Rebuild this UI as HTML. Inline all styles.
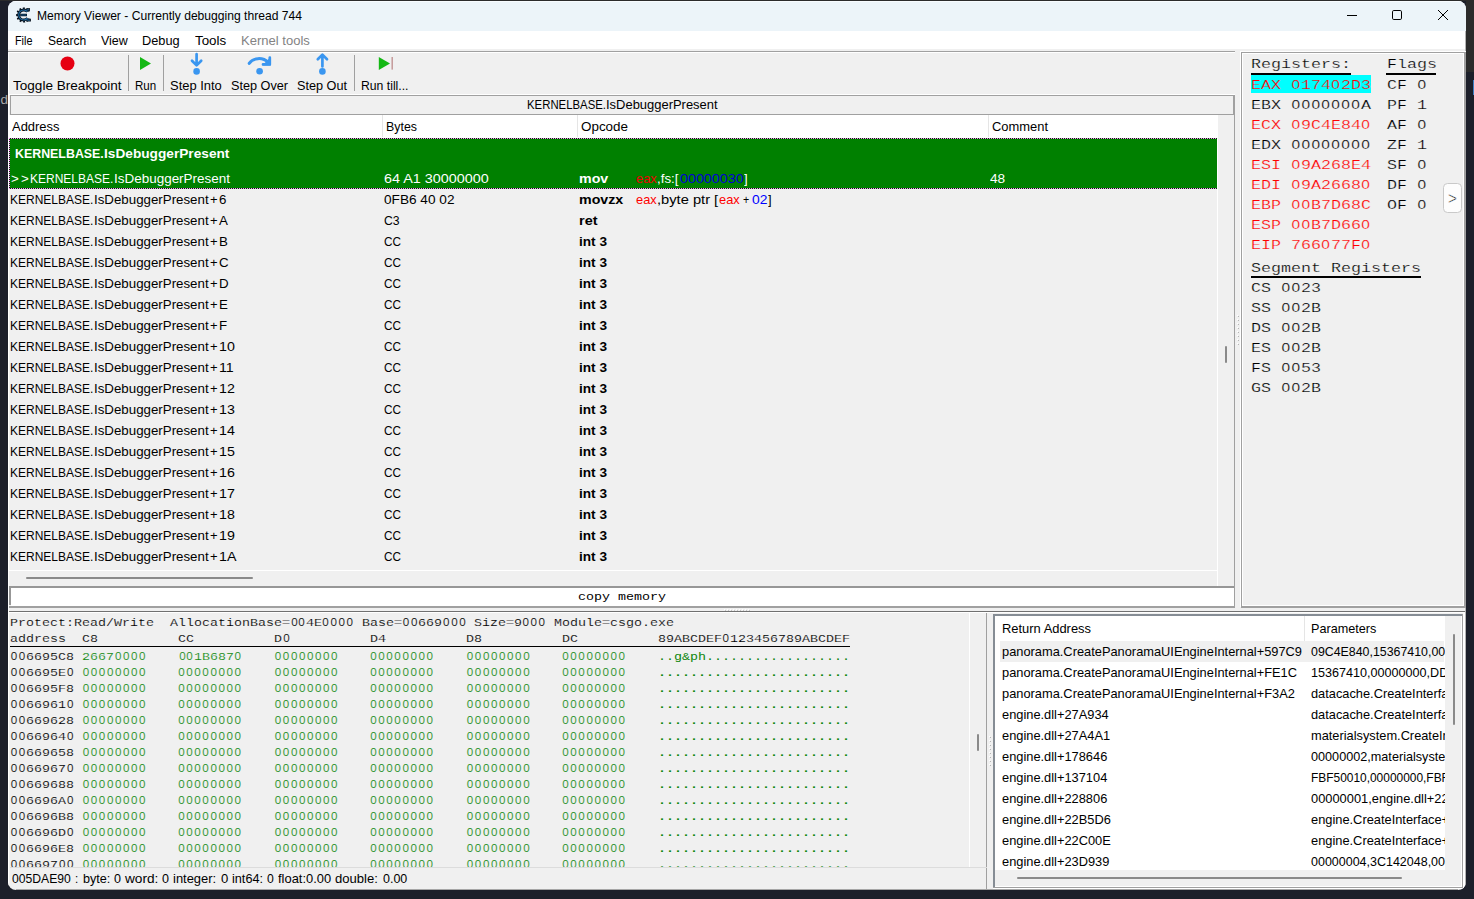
<!DOCTYPE html>
<html><head><meta charset="utf-8"><title>Memory Viewer</title>
<style>
html,body{margin:0;padding:0;}
body{width:1474px;height:899px;overflow:hidden;background:#1c1f2a;position:relative;font-family:"Liberation Sans",sans-serif;}
#w{position:absolute;left:8px;top:1px;width:1458px;height:889px;border-radius:8px;overflow:hidden;background:#f0f0f0;}
#o{position:absolute;left:-8px;top:-1px;width:1474px;height:899px;}
#o div,#o span,#o svg,.x{position:absolute;}
.t{white-space:pre;line-height:1;transform-origin:0 0;color:#000;font-family:"Liberation Sans",sans-serif;}
.m{font-family:"Liberation Mono",monospace;}
.b{font-weight:bold;}
.rg i{font-size:101% !important;width:0.594em !important;transform:scaleX(0.86);}
.m i{font-family:"Liberation Sans",sans-serif;font-style:normal;font-size:94.8%;display:inline-block;width:0.633em;text-align:center;line-height:0;transform:scaleX(0.92);}
</style></head><body>
<div class="x" style="left:0;top:0;width:1474px;height:1px;background:#2b2b2b"></div>
<div class="x" style="left:1466px;top:0;width:8px;height:72px;background:#2b2b2b"></div>
<div class="x" style="left:1472.5px;top:80px;width:2px;height:15px;background:#3b7fc4"></div>
<span class="x t" style="left:0.5px;top:93px;font-size:13.5px;color:#a9a9a9">d</span>
<div id="w"><div id="o">
<div style="left:8px;top:1px;width:1458px;height:30px;background:#ecf4f9;"></div>
<div style="left:8px;top:1px;width:1458px;height:1px;background:#f8fcff;"></div>
<svg style="left:16px;top:7px" width="16" height="16" viewBox="0 0 16 16">
<path d="M11.94 2.94A6.6 6.6 0 1 0 11.76 13.20" fill="none" stroke="#08131f" stroke-width="2" stroke-dasharray="1.8 1.66"/>
<path d="M11.42 4.65A5.0 5.0 0 1 0 11.53 11.21" fill="none" stroke="#08131f" stroke-width="2.8"/>
<path d="M4.2 8H11" stroke="#08131f" stroke-width="2.4"/>
<path d="M10 1.5L13.9 1.1V4.3L11.4 4.9ZM10 14.5L14.9 14.6V11.7L11.6 11.3Z" fill="#08131f"/>
<path d="M10.6 3L13 2.7M10.8 13L14 13.2" stroke="#1f6fa8" stroke-width="0.9"/>
<path d="M11.42 4.65A5.0 5.0 0 1 0 11.53 11.21" fill="none" stroke="#1f6fa8" stroke-width="1.1"/>
<path d="M4.8 8H10.4" stroke="#1f6fa8" stroke-width="0.8"/>
</svg>
<span class="t" style="left:36.8px;top:9.83px;font-size:12.6px;transform:scaleX(0.9616);">Memory Viewer - Currently debugging thread 744</span>
<svg style="left:1340px;top:5px" width="120" height="22" viewBox="0 0 120 22">
<g fill="none" stroke="#000" stroke-width="1">
<path d="M7 10.5H17"/>
<rect x="52.5" y="5.5" width="9" height="9" rx="1.3"/>
<path d="M98 5L108 15M108 5L98 15"/>
</g></svg>
<div style="left:8px;top:31px;width:1458px;height:18px;background:#fff;"></div>
<span class="t" style="left:15.1px;top:33.91px;font-size:13.1px;transform:scaleX(0.8243);">File</span>
<span class="t" style="left:47.9px;top:33.91px;font-size:13.1px;transform:scaleX(0.9205);">Search</span>
<span class="t" style="left:100.5px;top:33.91px;font-size:13.1px;transform:scaleX(0.9518);">View</span>
<span class="t" style="left:142.3px;top:33.91px;font-size:13.1px;transform:scaleX(0.9743);">Debug</span>
<span class="t" style="left:194.9px;top:33.91px;font-size:13.1px;transform:scaleX(1.0203);">Tools</span>
<span class="t" style="left:241.3px;top:33.91px;font-size:13.1px;color:#838383;transform:scaleX(0.9948);">Kernel tools</span>
<div style="left:8px;top:51px;width:1227px;height:1px;background:#a0a0a0;"></div>
<div style="left:8px;top:52px;width:1227px;height:1px;background:#fff;"></div>
<svg style="left:8px;top:52px" width="420" height="42" viewBox="8 52 420 42">
<circle cx="67.5" cy="63.5" r="7" fill="#e60012"/>
<path d="M140 57L151 63.5L140 70Z" fill="#14b814"/>
<g fill="none" stroke="#3a96f0" stroke-width="2.7" stroke-linecap="round" stroke-linejoin="round">
<path d="M196.6 54.2V65M192 60.8L196.6 65.4L201.2 60.8"/>
<path d="M249.2 63.4C253 57.8 262.5 56.6 268.4 62.6" stroke-width="3"/>
<path d="M269.8 57.6V64.4H263"/>
<path d="M322.4 66.4V55M317.8 59.2L322.4 54.6L327 59.2"/>
</g>
<g fill="#3a96f0"><circle cx="196.6" cy="71.4" r="3.3"/><circle cx="259.6" cy="71.2" r="3.3"/><circle cx="322.4" cy="71.4" r="3.3"/>
<path d="M270.9 56.6V65.5H262.4Z"/></g>
<path d="M378.8 57L390 63.5L378.8 70Z" fill="#14b814"/>
<rect x="391.6" y="57" width="1.1" height="12.6" fill="#b47a7a"/>
<g fill="#a0a0a0"><rect x="128" y="55" width="1" height="36"/><rect x="163" y="55" width="1" height="36"/><rect x="354" y="55" width="1" height="36"/></g>
</svg>
<span class="t" style="left:13.1px;top:78.91px;font-size:13.1px;transform:scaleX(1.0360);">Toggle Breakpoint</span>
<span class="t" style="left:135.1px;top:78.91px;font-size:13.1px;transform:scaleX(0.8822);">Run</span>
<span class="t" style="left:170.1px;top:78.91px;font-size:13.1px;transform:scaleX(0.9881);">Step Into</span>
<span class="t" style="left:231.3px;top:78.91px;font-size:13.1px;transform:scaleX(0.9669);">Step Over</span>
<span class="t" style="left:297.3px;top:78.91px;font-size:13.1px;transform:scaleX(0.9674);">Step Out</span>
<span class="t" style="left:360.6px;top:78.91px;font-size:13.1px;transform:scaleX(0.9325);">Run till...</span>
<div style="left:9px;top:94px;width:1226px;height:1px;background:#fff;"></div>
<div style="left:10px;top:95px;width:1224px;height:20px;background:#f0f0f0;box-sizing:border-box;border:1px solid #a0a0a0;"></div>
<div style="left:1234px;top:95px;width:1px;height:20px;background:#fff;"></div>
<span class="t" style="left:526.5px;top:98.83px;font-size:12.6px;transform:scaleX(0.9029);">KERNELBASE.</span>
<span class="t" style="left:605.9px;top:98.83px;font-size:12.6px;transform:scaleX(1.0284);">IsDebuggerPresent</span>
<div style="left:1234px;top:95px;width:1px;height:512px;background:#a0a0a0;"></div>
<div style="left:9px;top:115px;width:1209px;height:23px;background:#fff;"></div>
<div style="left:382px;top:115px;width:1px;height:22px;background:#e5e5e5;"></div>
<div style="left:577px;top:115px;width:1px;height:22px;background:#e5e5e5;"></div>
<div style="left:988px;top:115px;width:1px;height:22px;background:#e5e5e5;"></div>
<span class="t" style="left:11.8px;top:120.11px;font-size:13.1px;transform:scaleX(0.9886);">Address</span>
<span class="t" style="left:386.1px;top:120.11px;font-size:13.1px;transform:scaleX(0.9466);">Bytes</span>
<span class="t" style="left:580.5px;top:120.11px;font-size:13.1px;transform:scaleX(1.0245);">Opcode</span>
<span class="t" style="left:991.8px;top:120.11px;font-size:13.1px;transform:scaleX(0.9865);">Comment</span>
<div style="left:9px;top:138px;width:1208px;height:51px;background:#008000;"></div>
<div style="left:9px;top:138px;width:1208px;height:1px;background:repeating-linear-gradient(90deg,#ff80ff 0 1px,#004000 1px 2px);"></div>
<div style="left:9px;top:188px;width:1208px;height:1px;background:repeating-linear-gradient(90deg,#ff80ff 0 1px,#004000 1px 2px);"></div>
<div style="left:9px;top:138px;width:1px;height:51px;background:repeating-linear-gradient(180deg,#ff80ff 0 1px,#004000 1px 2px);"></div>
<div style="left:1217px;top:115px;width:1px;height:471px;background:#fff;"></div>
<span class="t b" style="left:14.6px;top:146.74px;font-size:13.3px;color:#fff;transform:scaleX(0.9317);">KERNELBASE.</span>
<span class="t b" style="left:103.9px;top:146.74px;font-size:13.3px;color:#fff;transform:scaleX(1.0284);">IsDebuggerPresent</span>
<span class="t" style="left:10.9px;top:171.94px;font-size:13.3px;color:#fff;transform:scaleX(1.0044);">&gt;</span>
<span class="t" style="left:21.3px;top:171.94px;font-size:13.3px;color:#fff;transform:scaleX(1.0044);">&gt;</span>
<span class="t" style="left:30.2px;top:171.94px;font-size:13.3px;color:#fff;transform:scaleX(0.9016);">KERNELBASE.</span>
<span class="t" style="left:113.7px;top:171.94px;font-size:13.3px;color:#fff;transform:scaleX(1.0124);">IsDebuggerPresent</span>
<span class="t" style="left:383.8px;top:171.94px;font-size:13.3px;color:#fff;transform:scaleX(1.0808);">64 A1 30000000</span>
<span class="t b" style="left:578.9px;top:171.94px;font-size:13.3px;color:#fff;transform:scaleX(1.0679);">mov</span>
<span class="t" style="left:635.6px;top:171.94px;font-size:13.3px;color:#ec0000;transform:scaleX(0.9649);">eax</span>
<span class="t" style="left:656.9px;top:171.94px;font-size:13.3px;color:#fff;transform:scaleX(1.0029);">,fs:[</span>
<span class="t" style="left:679.9px;top:171.94px;font-size:13.3px;color:#0000d8;transform:scaleX(1.0748);">00000030</span>
<span class="t" style="left:744.3px;top:171.94px;font-size:13.3px;color:#fff;transform:scaleX(0.9992);">]</span>
<span class="t" style="left:989.9px;top:171.94px;font-size:13.3px;color:#fff;transform:scaleX(1.0272);">48</span>
<span class="t" style="left:10.2px;top:192.99px;font-size:13.3px;transform:scaleX(0.9016);">KERNELBASE.</span>
<span class="t" style="left:93.7px;top:192.99px;font-size:13.3px;transform:scaleX(1.0002);">IsDebuggerPresent</span>
<span class="t" style="left:210.2px;top:192.99px;font-size:13.3px;transform:scaleX(0.9787);">+</span>
<span class="t" style="left:219.0px;top:192.99px;font-size:13.3px;transform:scaleX(1.0000);">6</span>
<span class="t" style="left:383.8px;top:192.99px;font-size:13.3px;transform:scaleX(1.0252);">0FB6 40 02</span>
<span class="t b" style="left:578.9px;top:192.99px;font-size:13.3px;transform:scaleX(1.0679);">movzx</span>
<span class="t" style="left:10.2px;top:213.99px;font-size:13.3px;transform:scaleX(0.9016);">KERNELBASE.</span>
<span class="t" style="left:93.7px;top:213.99px;font-size:13.3px;transform:scaleX(1.0002);">IsDebuggerPresent</span>
<span class="t" style="left:210.2px;top:213.99px;font-size:13.3px;transform:scaleX(0.9787);">+</span>
<span class="t" style="left:219.0px;top:213.99px;font-size:13.3px;transform:scaleX(1.0000);">A</span>
<span class="t" style="left:383.8px;top:213.99px;font-size:13.3px;transform:scaleX(0.9176);">C3</span>
<span class="t b" style="left:578.9px;top:213.99px;font-size:13.3px;transform:scaleX(1.0882);">ret</span>
<span class="t" style="left:10.2px;top:234.99px;font-size:13.3px;transform:scaleX(0.9016);">KERNELBASE.</span>
<span class="t" style="left:93.7px;top:234.99px;font-size:13.3px;transform:scaleX(1.0002);">IsDebuggerPresent</span>
<span class="t" style="left:210.2px;top:234.99px;font-size:13.3px;transform:scaleX(0.9787);">+</span>
<span class="t" style="left:219.0px;top:234.99px;font-size:13.3px;transform:scaleX(1.0000);">B</span>
<span class="t" style="left:383.8px;top:234.99px;font-size:13.3px;transform:scaleX(0.8846);">CC</span>
<span class="t b" style="left:578.9px;top:234.99px;font-size:13.3px;transform:scaleX(1.0240);">int 3</span>
<span class="t" style="left:10.2px;top:255.99px;font-size:13.3px;transform:scaleX(0.9016);">KERNELBASE.</span>
<span class="t" style="left:93.7px;top:255.99px;font-size:13.3px;transform:scaleX(1.0002);">IsDebuggerPresent</span>
<span class="t" style="left:210.2px;top:255.99px;font-size:13.3px;transform:scaleX(0.9787);">+</span>
<span class="t" style="left:219.0px;top:255.99px;font-size:13.3px;transform:scaleX(1.0000);">C</span>
<span class="t" style="left:383.8px;top:255.99px;font-size:13.3px;transform:scaleX(0.8846);">CC</span>
<span class="t b" style="left:578.9px;top:255.99px;font-size:13.3px;transform:scaleX(1.0240);">int 3</span>
<span class="t" style="left:10.2px;top:276.99px;font-size:13.3px;transform:scaleX(0.9016);">KERNELBASE.</span>
<span class="t" style="left:93.7px;top:276.99px;font-size:13.3px;transform:scaleX(1.0002);">IsDebuggerPresent</span>
<span class="t" style="left:210.2px;top:276.99px;font-size:13.3px;transform:scaleX(0.9787);">+</span>
<span class="t" style="left:219.0px;top:276.99px;font-size:13.3px;transform:scaleX(1.0000);">D</span>
<span class="t" style="left:383.8px;top:276.99px;font-size:13.3px;transform:scaleX(0.8846);">CC</span>
<span class="t b" style="left:578.9px;top:276.99px;font-size:13.3px;transform:scaleX(1.0240);">int 3</span>
<span class="t" style="left:10.2px;top:297.99px;font-size:13.3px;transform:scaleX(0.9016);">KERNELBASE.</span>
<span class="t" style="left:93.7px;top:297.99px;font-size:13.3px;transform:scaleX(1.0002);">IsDebuggerPresent</span>
<span class="t" style="left:210.2px;top:297.99px;font-size:13.3px;transform:scaleX(0.9787);">+</span>
<span class="t" style="left:219.0px;top:297.99px;font-size:13.3px;transform:scaleX(1.0000);">E</span>
<span class="t" style="left:383.8px;top:297.99px;font-size:13.3px;transform:scaleX(0.8846);">CC</span>
<span class="t b" style="left:578.9px;top:297.99px;font-size:13.3px;transform:scaleX(1.0240);">int 3</span>
<span class="t" style="left:10.2px;top:318.99px;font-size:13.3px;transform:scaleX(0.9016);">KERNELBASE.</span>
<span class="t" style="left:93.7px;top:318.99px;font-size:13.3px;transform:scaleX(1.0002);">IsDebuggerPresent</span>
<span class="t" style="left:210.2px;top:318.99px;font-size:13.3px;transform:scaleX(0.9787);">+</span>
<span class="t" style="left:219.0px;top:318.99px;font-size:13.3px;transform:scaleX(1.0000);">F</span>
<span class="t" style="left:383.8px;top:318.99px;font-size:13.3px;transform:scaleX(0.8846);">CC</span>
<span class="t b" style="left:578.9px;top:318.99px;font-size:13.3px;transform:scaleX(1.0240);">int 3</span>
<span class="t" style="left:10.2px;top:339.99px;font-size:13.3px;transform:scaleX(0.9016);">KERNELBASE.</span>
<span class="t" style="left:93.7px;top:339.99px;font-size:13.3px;transform:scaleX(1.0002);">IsDebuggerPresent</span>
<span class="t" style="left:210.2px;top:339.99px;font-size:13.3px;transform:scaleX(0.9787);">+</span>
<span class="t" style="left:219.0px;top:339.99px;font-size:13.3px;transform:scaleX(1.0700);">10</span>
<span class="t" style="left:383.8px;top:339.99px;font-size:13.3px;transform:scaleX(0.8846);">CC</span>
<span class="t b" style="left:578.9px;top:339.99px;font-size:13.3px;transform:scaleX(1.0240);">int 3</span>
<span class="t" style="left:10.2px;top:360.99px;font-size:13.3px;transform:scaleX(0.9016);">KERNELBASE.</span>
<span class="t" style="left:93.7px;top:360.99px;font-size:13.3px;transform:scaleX(1.0002);">IsDebuggerPresent</span>
<span class="t" style="left:210.2px;top:360.99px;font-size:13.3px;transform:scaleX(0.9787);">+</span>
<span class="t" style="left:219.0px;top:360.99px;font-size:13.3px;transform:scaleX(1.0700);">11</span>
<span class="t" style="left:383.8px;top:360.99px;font-size:13.3px;transform:scaleX(0.8846);">CC</span>
<span class="t b" style="left:578.9px;top:360.99px;font-size:13.3px;transform:scaleX(1.0240);">int 3</span>
<span class="t" style="left:10.2px;top:381.99px;font-size:13.3px;transform:scaleX(0.9016);">KERNELBASE.</span>
<span class="t" style="left:93.7px;top:381.99px;font-size:13.3px;transform:scaleX(1.0002);">IsDebuggerPresent</span>
<span class="t" style="left:210.2px;top:381.99px;font-size:13.3px;transform:scaleX(0.9787);">+</span>
<span class="t" style="left:219.0px;top:381.99px;font-size:13.3px;transform:scaleX(1.0700);">12</span>
<span class="t" style="left:383.8px;top:381.99px;font-size:13.3px;transform:scaleX(0.8846);">CC</span>
<span class="t b" style="left:578.9px;top:381.99px;font-size:13.3px;transform:scaleX(1.0240);">int 3</span>
<span class="t" style="left:10.2px;top:402.99px;font-size:13.3px;transform:scaleX(0.9016);">KERNELBASE.</span>
<span class="t" style="left:93.7px;top:402.99px;font-size:13.3px;transform:scaleX(1.0002);">IsDebuggerPresent</span>
<span class="t" style="left:210.2px;top:402.99px;font-size:13.3px;transform:scaleX(0.9787);">+</span>
<span class="t" style="left:219.0px;top:402.99px;font-size:13.3px;transform:scaleX(1.0700);">13</span>
<span class="t" style="left:383.8px;top:402.99px;font-size:13.3px;transform:scaleX(0.8846);">CC</span>
<span class="t b" style="left:578.9px;top:402.99px;font-size:13.3px;transform:scaleX(1.0240);">int 3</span>
<span class="t" style="left:10.2px;top:423.99px;font-size:13.3px;transform:scaleX(0.9016);">KERNELBASE.</span>
<span class="t" style="left:93.7px;top:423.99px;font-size:13.3px;transform:scaleX(1.0002);">IsDebuggerPresent</span>
<span class="t" style="left:210.2px;top:423.99px;font-size:13.3px;transform:scaleX(0.9787);">+</span>
<span class="t" style="left:219.0px;top:423.99px;font-size:13.3px;transform:scaleX(1.0700);">14</span>
<span class="t" style="left:383.8px;top:423.99px;font-size:13.3px;transform:scaleX(0.8846);">CC</span>
<span class="t b" style="left:578.9px;top:423.99px;font-size:13.3px;transform:scaleX(1.0240);">int 3</span>
<span class="t" style="left:10.2px;top:444.99px;font-size:13.3px;transform:scaleX(0.9016);">KERNELBASE.</span>
<span class="t" style="left:93.7px;top:444.99px;font-size:13.3px;transform:scaleX(1.0002);">IsDebuggerPresent</span>
<span class="t" style="left:210.2px;top:444.99px;font-size:13.3px;transform:scaleX(0.9787);">+</span>
<span class="t" style="left:219.0px;top:444.99px;font-size:13.3px;transform:scaleX(1.0700);">15</span>
<span class="t" style="left:383.8px;top:444.99px;font-size:13.3px;transform:scaleX(0.8846);">CC</span>
<span class="t b" style="left:578.9px;top:444.99px;font-size:13.3px;transform:scaleX(1.0240);">int 3</span>
<span class="t" style="left:10.2px;top:465.99px;font-size:13.3px;transform:scaleX(0.9016);">KERNELBASE.</span>
<span class="t" style="left:93.7px;top:465.99px;font-size:13.3px;transform:scaleX(1.0002);">IsDebuggerPresent</span>
<span class="t" style="left:210.2px;top:465.99px;font-size:13.3px;transform:scaleX(0.9787);">+</span>
<span class="t" style="left:219.0px;top:465.99px;font-size:13.3px;transform:scaleX(1.0700);">16</span>
<span class="t" style="left:383.8px;top:465.99px;font-size:13.3px;transform:scaleX(0.8846);">CC</span>
<span class="t b" style="left:578.9px;top:465.99px;font-size:13.3px;transform:scaleX(1.0240);">int 3</span>
<span class="t" style="left:10.2px;top:486.99px;font-size:13.3px;transform:scaleX(0.9016);">KERNELBASE.</span>
<span class="t" style="left:93.7px;top:486.99px;font-size:13.3px;transform:scaleX(1.0002);">IsDebuggerPresent</span>
<span class="t" style="left:210.2px;top:486.99px;font-size:13.3px;transform:scaleX(0.9787);">+</span>
<span class="t" style="left:219.0px;top:486.99px;font-size:13.3px;transform:scaleX(1.0700);">17</span>
<span class="t" style="left:383.8px;top:486.99px;font-size:13.3px;transform:scaleX(0.8846);">CC</span>
<span class="t b" style="left:578.9px;top:486.99px;font-size:13.3px;transform:scaleX(1.0240);">int 3</span>
<span class="t" style="left:10.2px;top:507.99px;font-size:13.3px;transform:scaleX(0.9016);">KERNELBASE.</span>
<span class="t" style="left:93.7px;top:507.99px;font-size:13.3px;transform:scaleX(1.0002);">IsDebuggerPresent</span>
<span class="t" style="left:210.2px;top:507.99px;font-size:13.3px;transform:scaleX(0.9787);">+</span>
<span class="t" style="left:219.0px;top:507.99px;font-size:13.3px;transform:scaleX(1.0700);">18</span>
<span class="t" style="left:383.8px;top:507.99px;font-size:13.3px;transform:scaleX(0.8846);">CC</span>
<span class="t b" style="left:578.9px;top:507.99px;font-size:13.3px;transform:scaleX(1.0240);">int 3</span>
<span class="t" style="left:10.2px;top:528.99px;font-size:13.3px;transform:scaleX(0.9016);">KERNELBASE.</span>
<span class="t" style="left:93.7px;top:528.99px;font-size:13.3px;transform:scaleX(1.0002);">IsDebuggerPresent</span>
<span class="t" style="left:210.2px;top:528.99px;font-size:13.3px;transform:scaleX(0.9787);">+</span>
<span class="t" style="left:219.0px;top:528.99px;font-size:13.3px;transform:scaleX(1.0700);">19</span>
<span class="t" style="left:383.8px;top:528.99px;font-size:13.3px;transform:scaleX(0.8846);">CC</span>
<span class="t b" style="left:578.9px;top:528.99px;font-size:13.3px;transform:scaleX(1.0240);">int 3</span>
<span class="t" style="left:10.2px;top:549.99px;font-size:13.3px;transform:scaleX(0.9016);">KERNELBASE.</span>
<span class="t" style="left:93.7px;top:549.99px;font-size:13.3px;transform:scaleX(1.0002);">IsDebuggerPresent</span>
<span class="t" style="left:210.2px;top:549.99px;font-size:13.3px;transform:scaleX(0.9787);">+</span>
<span class="t" style="left:219.0px;top:549.99px;font-size:13.3px;transform:scaleX(1.0700);">1A</span>
<span class="t" style="left:383.8px;top:549.99px;font-size:13.3px;transform:scaleX(0.8846);">CC</span>
<span class="t b" style="left:578.9px;top:549.99px;font-size:13.3px;transform:scaleX(1.0240);">int 3</span>
<span class="t" style="left:635.6px;top:192.99px;font-size:13.3px;color:#ff0000;transform:scaleX(0.9649);">eax</span>
<span class="t" style="left:656.9px;top:192.99px;font-size:13.3px;transform:scaleX(1.1039);">,byte ptr [</span>
<span class="t" style="left:718.6px;top:192.99px;font-size:13.3px;color:#ff0000;transform:scaleX(0.9649);">eax</span>
<span class="t" style="left:742.6px;top:192.99px;font-size:13.3px;transform:scaleX(0.7984);">+</span>
<span class="t" style="left:751.9px;top:192.99px;font-size:13.3px;color:#0000ff;transform:scaleX(1.0408);">02</span>
<span class="t" style="left:768.3px;top:192.99px;font-size:13.3px;transform:scaleX(0.9722);">]</span>
<div style="left:1225px;top:346px;width:2px;height:17px;background:#8a8a8a;border-radius:1px;"></div>
<div style="left:9px;top:570px;width:1209px;height:1px;background:#fff;"></div>
<div style="left:26px;top:577px;width:227px;height:2px;background:#8a8a8a;border-radius:1px;"></div>
<div style="left:9px;top:586px;width:1225px;height:2px;background:#979797;"></div>
<div style="left:9px;top:586px;width:2px;height:19px;background:#979797;"></div>
<div style="left:11px;top:588px;width:1223px;height:18px;background:#fff;"></div>
<div style="left:9px;top:606px;width:1226px;height:1.5px;background:#a0a0a0;"></div>
<span class="t m" style="left:577.5px;top:591.18px;font-size:11.5px;transform:scaleX(1.1591);">copy memory</span>
<div style="left:724px;top:609px;width:1px;height:1px;background:#fff;"></div>
<div style="left:725px;top:610px;width:1px;height:1px;background:#c4c4c4;"></div>
<div style="left:727px;top:609px;width:1px;height:1px;background:#fff;"></div>
<div style="left:728px;top:610px;width:1px;height:1px;background:#c4c4c4;"></div>
<div style="left:730px;top:609px;width:1px;height:1px;background:#fff;"></div>
<div style="left:731px;top:610px;width:1px;height:1px;background:#c4c4c4;"></div>
<div style="left:733px;top:609px;width:1px;height:1px;background:#fff;"></div>
<div style="left:734px;top:610px;width:1px;height:1px;background:#c4c4c4;"></div>
<div style="left:736px;top:609px;width:1px;height:1px;background:#fff;"></div>
<div style="left:737px;top:610px;width:1px;height:1px;background:#c4c4c4;"></div>
<div style="left:739px;top:609px;width:1px;height:1px;background:#fff;"></div>
<div style="left:740px;top:610px;width:1px;height:1px;background:#c4c4c4;"></div>
<div style="left:742px;top:609px;width:1px;height:1px;background:#fff;"></div>
<div style="left:743px;top:610px;width:1px;height:1px;background:#c4c4c4;"></div>
<div style="left:745px;top:609px;width:1px;height:1px;background:#fff;"></div>
<div style="left:746px;top:610px;width:1px;height:1px;background:#c4c4c4;"></div>
<div style="left:748px;top:609px;width:1px;height:1px;background:#fff;"></div>
<div style="left:749px;top:610px;width:1px;height:1px;background:#c4c4c4;"></div>
<div style="left:8px;top:611px;width:1458px;height:1px;background:#707070;"></div>
<div style="left:8px;top:612px;width:1458px;height:1px;background:#fff;"></div>
<div style="left:986px;top:613px;width:1px;height:276px;background:#a0a0a0;"></div>
<div style="left:8px;top:52px;width:1px;height:838px;background:#fff;"></div>
<span class="t m" style="left:10.4px;top:616.91px;font-size:11.6px;transform:scaleX(1.1498);-webkit-text-stroke:0.14px #f0f0f0;">Protect:Read/Write  AllocationBase=<i>0</i><i>0</i>4E<i>0</i><i>0</i><i>0</i><i>0</i> Base=<i>0</i><i>0</i>669<i>0</i><i>0</i><i>0</i> Size=9<i>0</i><i>0</i><i>0</i> Module=csgo.exe</span>
<span class="t m" style="left:10.4px;top:633.11px;font-size:11.6px;transform:scaleX(1.1498);-webkit-text-stroke:0.14px #f0f0f0;">address  C8          CC          D<i>0</i>          D4          D8          DC          89ABCDEF<i>0</i>123456789ABCDEF</span>
<div style="left:10px;top:646px;width:840px;height:1px;background:#000;"></div>
<div style="left:9px;top:648px;width:962px;height:219px;overflow:hidden"><div style="left:-9px;top:-648px;width:1px;height:1px">
<span class="t m" style="left:10.4px;top:651.11px;font-size:11.6px;transform:scaleX(1.1496);-webkit-text-stroke:0.14px #f0f0f0;"><i>0</i><i>0</i>6695C8</span>
<span class="t m" style="left:82.4px;top:651.11px;font-size:11.6px;color:#128a12;transform:scaleX(1.1498);-webkit-text-stroke:0.14px #f0f0f0;">2667<i>0</i><i>0</i><i>0</i><i>0</i>    <i>0</i><i>0</i>1B687<i>0</i>    <i>0</i><i>0</i><i>0</i><i>0</i><i>0</i><i>0</i><i>0</i><i>0</i>    <i>0</i><i>0</i><i>0</i><i>0</i><i>0</i><i>0</i><i>0</i><i>0</i>    <i>0</i><i>0</i><i>0</i><i>0</i><i>0</i><i>0</i><i>0</i><i>0</i>    <i>0</i><i>0</i><i>0</i><i>0</i><i>0</i><i>0</i><i>0</i><i>0</i></span>
<span class="t m" style="left:658.4px;top:651.11px;font-size:11.6px;color:#0c860c;transform:scaleX(1.1498);">..g&amp;ph..................</span>
<span class="t m" style="left:10.4px;top:667.11px;font-size:11.6px;transform:scaleX(1.1496);-webkit-text-stroke:0.14px #f0f0f0;"><i>0</i><i>0</i>6695E<i>0</i></span>
<span class="t m" style="left:82.4px;top:667.11px;font-size:11.6px;color:#128a12;transform:scaleX(1.1498);-webkit-text-stroke:0.14px #f0f0f0;"><i>0</i><i>0</i><i>0</i><i>0</i><i>0</i><i>0</i><i>0</i><i>0</i>    <i>0</i><i>0</i><i>0</i><i>0</i><i>0</i><i>0</i><i>0</i><i>0</i>    <i>0</i><i>0</i><i>0</i><i>0</i><i>0</i><i>0</i><i>0</i><i>0</i>    <i>0</i><i>0</i><i>0</i><i>0</i><i>0</i><i>0</i><i>0</i><i>0</i>    <i>0</i><i>0</i><i>0</i><i>0</i><i>0</i><i>0</i><i>0</i><i>0</i>    <i>0</i><i>0</i><i>0</i><i>0</i><i>0</i><i>0</i><i>0</i><i>0</i></span>
<span class="t m b" style="left:658.4px;top:667.11px;font-size:11.6px;color:#0c860c;transform:scaleX(1.1498);">........................</span>
<span class="t m" style="left:10.4px;top:683.11px;font-size:11.6px;transform:scaleX(1.1496);-webkit-text-stroke:0.14px #f0f0f0;"><i>0</i><i>0</i>6695F8</span>
<span class="t m" style="left:82.4px;top:683.11px;font-size:11.6px;color:#128a12;transform:scaleX(1.1498);-webkit-text-stroke:0.14px #f0f0f0;"><i>0</i><i>0</i><i>0</i><i>0</i><i>0</i><i>0</i><i>0</i><i>0</i>    <i>0</i><i>0</i><i>0</i><i>0</i><i>0</i><i>0</i><i>0</i><i>0</i>    <i>0</i><i>0</i><i>0</i><i>0</i><i>0</i><i>0</i><i>0</i><i>0</i>    <i>0</i><i>0</i><i>0</i><i>0</i><i>0</i><i>0</i><i>0</i><i>0</i>    <i>0</i><i>0</i><i>0</i><i>0</i><i>0</i><i>0</i><i>0</i><i>0</i>    <i>0</i><i>0</i><i>0</i><i>0</i><i>0</i><i>0</i><i>0</i><i>0</i></span>
<span class="t m b" style="left:658.4px;top:683.11px;font-size:11.6px;color:#0c860c;transform:scaleX(1.1498);">........................</span>
<span class="t m" style="left:10.4px;top:699.11px;font-size:11.6px;transform:scaleX(1.1496);-webkit-text-stroke:0.14px #f0f0f0;"><i>0</i><i>0</i>66961<i>0</i></span>
<span class="t m" style="left:82.4px;top:699.11px;font-size:11.6px;color:#128a12;transform:scaleX(1.1498);-webkit-text-stroke:0.14px #f0f0f0;"><i>0</i><i>0</i><i>0</i><i>0</i><i>0</i><i>0</i><i>0</i><i>0</i>    <i>0</i><i>0</i><i>0</i><i>0</i><i>0</i><i>0</i><i>0</i><i>0</i>    <i>0</i><i>0</i><i>0</i><i>0</i><i>0</i><i>0</i><i>0</i><i>0</i>    <i>0</i><i>0</i><i>0</i><i>0</i><i>0</i><i>0</i><i>0</i><i>0</i>    <i>0</i><i>0</i><i>0</i><i>0</i><i>0</i><i>0</i><i>0</i><i>0</i>    <i>0</i><i>0</i><i>0</i><i>0</i><i>0</i><i>0</i><i>0</i><i>0</i></span>
<span class="t m b" style="left:658.4px;top:699.11px;font-size:11.6px;color:#0c860c;transform:scaleX(1.1498);">........................</span>
<span class="t m" style="left:10.4px;top:715.11px;font-size:11.6px;transform:scaleX(1.1496);-webkit-text-stroke:0.14px #f0f0f0;"><i>0</i><i>0</i>669628</span>
<span class="t m" style="left:82.4px;top:715.11px;font-size:11.6px;color:#128a12;transform:scaleX(1.1498);-webkit-text-stroke:0.14px #f0f0f0;"><i>0</i><i>0</i><i>0</i><i>0</i><i>0</i><i>0</i><i>0</i><i>0</i>    <i>0</i><i>0</i><i>0</i><i>0</i><i>0</i><i>0</i><i>0</i><i>0</i>    <i>0</i><i>0</i><i>0</i><i>0</i><i>0</i><i>0</i><i>0</i><i>0</i>    <i>0</i><i>0</i><i>0</i><i>0</i><i>0</i><i>0</i><i>0</i><i>0</i>    <i>0</i><i>0</i><i>0</i><i>0</i><i>0</i><i>0</i><i>0</i><i>0</i>    <i>0</i><i>0</i><i>0</i><i>0</i><i>0</i><i>0</i><i>0</i><i>0</i></span>
<span class="t m b" style="left:658.4px;top:715.11px;font-size:11.6px;color:#0c860c;transform:scaleX(1.1498);">........................</span>
<span class="t m" style="left:10.4px;top:731.11px;font-size:11.6px;transform:scaleX(1.1496);-webkit-text-stroke:0.14px #f0f0f0;"><i>0</i><i>0</i>66964<i>0</i></span>
<span class="t m" style="left:82.4px;top:731.11px;font-size:11.6px;color:#128a12;transform:scaleX(1.1498);-webkit-text-stroke:0.14px #f0f0f0;"><i>0</i><i>0</i><i>0</i><i>0</i><i>0</i><i>0</i><i>0</i><i>0</i>    <i>0</i><i>0</i><i>0</i><i>0</i><i>0</i><i>0</i><i>0</i><i>0</i>    <i>0</i><i>0</i><i>0</i><i>0</i><i>0</i><i>0</i><i>0</i><i>0</i>    <i>0</i><i>0</i><i>0</i><i>0</i><i>0</i><i>0</i><i>0</i><i>0</i>    <i>0</i><i>0</i><i>0</i><i>0</i><i>0</i><i>0</i><i>0</i><i>0</i>    <i>0</i><i>0</i><i>0</i><i>0</i><i>0</i><i>0</i><i>0</i><i>0</i></span>
<span class="t m b" style="left:658.4px;top:731.11px;font-size:11.6px;color:#0c860c;transform:scaleX(1.1498);">........................</span>
<span class="t m" style="left:10.4px;top:747.11px;font-size:11.6px;transform:scaleX(1.1496);-webkit-text-stroke:0.14px #f0f0f0;"><i>0</i><i>0</i>669658</span>
<span class="t m" style="left:82.4px;top:747.11px;font-size:11.6px;color:#128a12;transform:scaleX(1.1498);-webkit-text-stroke:0.14px #f0f0f0;"><i>0</i><i>0</i><i>0</i><i>0</i><i>0</i><i>0</i><i>0</i><i>0</i>    <i>0</i><i>0</i><i>0</i><i>0</i><i>0</i><i>0</i><i>0</i><i>0</i>    <i>0</i><i>0</i><i>0</i><i>0</i><i>0</i><i>0</i><i>0</i><i>0</i>    <i>0</i><i>0</i><i>0</i><i>0</i><i>0</i><i>0</i><i>0</i><i>0</i>    <i>0</i><i>0</i><i>0</i><i>0</i><i>0</i><i>0</i><i>0</i><i>0</i>    <i>0</i><i>0</i><i>0</i><i>0</i><i>0</i><i>0</i><i>0</i><i>0</i></span>
<span class="t m b" style="left:658.4px;top:747.11px;font-size:11.6px;color:#0c860c;transform:scaleX(1.1498);">........................</span>
<span class="t m" style="left:10.4px;top:763.11px;font-size:11.6px;transform:scaleX(1.1496);-webkit-text-stroke:0.14px #f0f0f0;"><i>0</i><i>0</i>66967<i>0</i></span>
<span class="t m" style="left:82.4px;top:763.11px;font-size:11.6px;color:#128a12;transform:scaleX(1.1498);-webkit-text-stroke:0.14px #f0f0f0;"><i>0</i><i>0</i><i>0</i><i>0</i><i>0</i><i>0</i><i>0</i><i>0</i>    <i>0</i><i>0</i><i>0</i><i>0</i><i>0</i><i>0</i><i>0</i><i>0</i>    <i>0</i><i>0</i><i>0</i><i>0</i><i>0</i><i>0</i><i>0</i><i>0</i>    <i>0</i><i>0</i><i>0</i><i>0</i><i>0</i><i>0</i><i>0</i><i>0</i>    <i>0</i><i>0</i><i>0</i><i>0</i><i>0</i><i>0</i><i>0</i><i>0</i>    <i>0</i><i>0</i><i>0</i><i>0</i><i>0</i><i>0</i><i>0</i><i>0</i></span>
<span class="t m b" style="left:658.4px;top:763.11px;font-size:11.6px;color:#0c860c;transform:scaleX(1.1498);">........................</span>
<span class="t m" style="left:10.4px;top:779.11px;font-size:11.6px;transform:scaleX(1.1496);-webkit-text-stroke:0.14px #f0f0f0;"><i>0</i><i>0</i>669688</span>
<span class="t m" style="left:82.4px;top:779.11px;font-size:11.6px;color:#128a12;transform:scaleX(1.1498);-webkit-text-stroke:0.14px #f0f0f0;"><i>0</i><i>0</i><i>0</i><i>0</i><i>0</i><i>0</i><i>0</i><i>0</i>    <i>0</i><i>0</i><i>0</i><i>0</i><i>0</i><i>0</i><i>0</i><i>0</i>    <i>0</i><i>0</i><i>0</i><i>0</i><i>0</i><i>0</i><i>0</i><i>0</i>    <i>0</i><i>0</i><i>0</i><i>0</i><i>0</i><i>0</i><i>0</i><i>0</i>    <i>0</i><i>0</i><i>0</i><i>0</i><i>0</i><i>0</i><i>0</i><i>0</i>    <i>0</i><i>0</i><i>0</i><i>0</i><i>0</i><i>0</i><i>0</i><i>0</i></span>
<span class="t m b" style="left:658.4px;top:779.11px;font-size:11.6px;color:#0c860c;transform:scaleX(1.1498);">........................</span>
<span class="t m" style="left:10.4px;top:795.11px;font-size:11.6px;transform:scaleX(1.1496);-webkit-text-stroke:0.14px #f0f0f0;"><i>0</i><i>0</i>6696A<i>0</i></span>
<span class="t m" style="left:82.4px;top:795.11px;font-size:11.6px;color:#128a12;transform:scaleX(1.1498);-webkit-text-stroke:0.14px #f0f0f0;"><i>0</i><i>0</i><i>0</i><i>0</i><i>0</i><i>0</i><i>0</i><i>0</i>    <i>0</i><i>0</i><i>0</i><i>0</i><i>0</i><i>0</i><i>0</i><i>0</i>    <i>0</i><i>0</i><i>0</i><i>0</i><i>0</i><i>0</i><i>0</i><i>0</i>    <i>0</i><i>0</i><i>0</i><i>0</i><i>0</i><i>0</i><i>0</i><i>0</i>    <i>0</i><i>0</i><i>0</i><i>0</i><i>0</i><i>0</i><i>0</i><i>0</i>    <i>0</i><i>0</i><i>0</i><i>0</i><i>0</i><i>0</i><i>0</i><i>0</i></span>
<span class="t m b" style="left:658.4px;top:795.11px;font-size:11.6px;color:#0c860c;transform:scaleX(1.1498);">........................</span>
<span class="t m" style="left:10.4px;top:811.11px;font-size:11.6px;transform:scaleX(1.1496);-webkit-text-stroke:0.14px #f0f0f0;"><i>0</i><i>0</i>6696B8</span>
<span class="t m" style="left:82.4px;top:811.11px;font-size:11.6px;color:#128a12;transform:scaleX(1.1498);-webkit-text-stroke:0.14px #f0f0f0;"><i>0</i><i>0</i><i>0</i><i>0</i><i>0</i><i>0</i><i>0</i><i>0</i>    <i>0</i><i>0</i><i>0</i><i>0</i><i>0</i><i>0</i><i>0</i><i>0</i>    <i>0</i><i>0</i><i>0</i><i>0</i><i>0</i><i>0</i><i>0</i><i>0</i>    <i>0</i><i>0</i><i>0</i><i>0</i><i>0</i><i>0</i><i>0</i><i>0</i>    <i>0</i><i>0</i><i>0</i><i>0</i><i>0</i><i>0</i><i>0</i><i>0</i>    <i>0</i><i>0</i><i>0</i><i>0</i><i>0</i><i>0</i><i>0</i><i>0</i></span>
<span class="t m b" style="left:658.4px;top:811.11px;font-size:11.6px;color:#0c860c;transform:scaleX(1.1498);">........................</span>
<span class="t m" style="left:10.4px;top:827.11px;font-size:11.6px;transform:scaleX(1.1496);-webkit-text-stroke:0.14px #f0f0f0;"><i>0</i><i>0</i>6696D<i>0</i></span>
<span class="t m" style="left:82.4px;top:827.11px;font-size:11.6px;color:#128a12;transform:scaleX(1.1498);-webkit-text-stroke:0.14px #f0f0f0;"><i>0</i><i>0</i><i>0</i><i>0</i><i>0</i><i>0</i><i>0</i><i>0</i>    <i>0</i><i>0</i><i>0</i><i>0</i><i>0</i><i>0</i><i>0</i><i>0</i>    <i>0</i><i>0</i><i>0</i><i>0</i><i>0</i><i>0</i><i>0</i><i>0</i>    <i>0</i><i>0</i><i>0</i><i>0</i><i>0</i><i>0</i><i>0</i><i>0</i>    <i>0</i><i>0</i><i>0</i><i>0</i><i>0</i><i>0</i><i>0</i><i>0</i>    <i>0</i><i>0</i><i>0</i><i>0</i><i>0</i><i>0</i><i>0</i><i>0</i></span>
<span class="t m b" style="left:658.4px;top:827.11px;font-size:11.6px;color:#0c860c;transform:scaleX(1.1498);">........................</span>
<span class="t m" style="left:10.4px;top:843.11px;font-size:11.6px;transform:scaleX(1.1496);-webkit-text-stroke:0.14px #f0f0f0;"><i>0</i><i>0</i>6696E8</span>
<span class="t m" style="left:82.4px;top:843.11px;font-size:11.6px;color:#128a12;transform:scaleX(1.1498);-webkit-text-stroke:0.14px #f0f0f0;"><i>0</i><i>0</i><i>0</i><i>0</i><i>0</i><i>0</i><i>0</i><i>0</i>    <i>0</i><i>0</i><i>0</i><i>0</i><i>0</i><i>0</i><i>0</i><i>0</i>    <i>0</i><i>0</i><i>0</i><i>0</i><i>0</i><i>0</i><i>0</i><i>0</i>    <i>0</i><i>0</i><i>0</i><i>0</i><i>0</i><i>0</i><i>0</i><i>0</i>    <i>0</i><i>0</i><i>0</i><i>0</i><i>0</i><i>0</i><i>0</i><i>0</i>    <i>0</i><i>0</i><i>0</i><i>0</i><i>0</i><i>0</i><i>0</i><i>0</i></span>
<span class="t m b" style="left:658.4px;top:843.11px;font-size:11.6px;color:#0c860c;transform:scaleX(1.1498);">........................</span>
<span class="t m" style="left:10.4px;top:859.11px;font-size:11.6px;transform:scaleX(1.1496);-webkit-text-stroke:0.14px #f0f0f0;"><i>0</i><i>0</i>6697<i>0</i><i>0</i></span>
<span class="t m" style="left:82.4px;top:859.11px;font-size:11.6px;color:#128a12;transform:scaleX(1.1498);-webkit-text-stroke:0.14px #f0f0f0;"><i>0</i><i>0</i><i>0</i><i>0</i><i>0</i><i>0</i><i>0</i><i>0</i>    <i>0</i><i>0</i><i>0</i><i>0</i><i>0</i><i>0</i><i>0</i><i>0</i>    <i>0</i><i>0</i><i>0</i><i>0</i><i>0</i><i>0</i><i>0</i><i>0</i>    <i>0</i><i>0</i><i>0</i><i>0</i><i>0</i><i>0</i><i>0</i><i>0</i>    <i>0</i><i>0</i><i>0</i><i>0</i><i>0</i><i>0</i><i>0</i><i>0</i>    <i>0</i><i>0</i><i>0</i><i>0</i><i>0</i><i>0</i><i>0</i><i>0</i></span>
<span class="t m b" style="left:658.4px;top:859.11px;font-size:11.6px;color:#0c860c;transform:scaleX(1.1498);">........................</span>
</div></div>
<div style="left:969px;top:613px;width:1px;height:255px;background:#fff;"></div>
<div style="left:977px;top:734px;width:2px;height:17px;background:#8a8a8a;border-radius:1px;"></div>
<div style="left:10px;top:867px;width:977px;height:1px;background:#dcdcdc;"></div>
<span class="t" style="left:12.3px;top:871.71px;font-size:13.1px;transform:scaleX(0.9283);">005DAE90</span>
<span class="t" style="left:74.7px;top:871.71px;font-size:13.1px;transform:scaleX(0.8790);">:</span>
<span class="t" style="left:82.5px;top:871.71px;font-size:13.1px;transform:scaleX(0.9616);">byte:</span>
<span class="t" style="left:114.0px;top:871.71px;font-size:13.1px;transform:scaleX(0.9593);">0</span>
<span class="t" style="left:124.9px;top:871.71px;font-size:13.1px;transform:scaleX(1.0427);">word:</span>
<span class="t" style="left:162.2px;top:871.71px;font-size:13.1px;transform:scaleX(0.9593);">0</span>
<span class="t" style="left:173.1px;top:871.71px;font-size:13.1px;transform:scaleX(0.9888);">integer:</span>
<span class="t" style="left:220.6px;top:871.71px;font-size:13.1px;transform:scaleX(1.0004);">0</span>
<span class="t" style="left:231.8px;top:871.71px;font-size:13.1px;transform:scaleX(0.9678);">int64:</span>
<span class="t" style="left:267.4px;top:871.71px;font-size:13.1px;transform:scaleX(0.9319);">0</span>
<span class="t" style="left:278.2px;top:871.71px;font-size:13.1px;transform:scaleX(0.9856);">float:0.00</span>
<span class="t" style="left:335.2px;top:871.71px;font-size:13.1px;transform:scaleX(0.9984);">double:</span>
<span class="t" style="left:382.7px;top:871.71px;font-size:13.1px;transform:scaleX(0.9535);">0.00</span>
<div style="left:16px;top:889px;width:1442px;height:1px;background:#a6a6a6;"></div>
<div style="left:989px;top:736px;width:1px;height:1px;background:#fff;"></div>
<div style="left:990px;top:737px;width:1px;height:1px;background:#b4b4b4;"></div>
<div style="left:989px;top:740px;width:1px;height:1px;background:#fff;"></div>
<div style="left:990px;top:741px;width:1px;height:1px;background:#b4b4b4;"></div>
<div style="left:989px;top:744px;width:1px;height:1px;background:#fff;"></div>
<div style="left:990px;top:745px;width:1px;height:1px;background:#b4b4b4;"></div>
<div style="left:989px;top:748px;width:1px;height:1px;background:#fff;"></div>
<div style="left:990px;top:749px;width:1px;height:1px;background:#b4b4b4;"></div>
<div style="left:989px;top:752px;width:1px;height:1px;background:#fff;"></div>
<div style="left:990px;top:753px;width:1px;height:1px;background:#b4b4b4;"></div>
<div style="left:989px;top:756px;width:1px;height:1px;background:#fff;"></div>
<div style="left:990px;top:757px;width:1px;height:1px;background:#b4b4b4;"></div>
<div style="left:989px;top:760px;width:1px;height:1px;background:#fff;"></div>
<div style="left:990px;top:761px;width:1px;height:1px;background:#b4b4b4;"></div>
<div style="left:989px;top:764px;width:1px;height:1px;background:#fff;"></div>
<div style="left:990px;top:765px;width:1px;height:1px;background:#b4b4b4;"></div>
<div style="left:993px;top:614px;width:470px;height:274px;background:#fff;"></div>
<div style="left:993px;top:614px;width:470px;height:2px;background:#868d95;"></div>
<div style="left:993px;top:614px;width:2px;height:274px;background:#868d95;"></div>
<div style="left:1445px;top:616px;width:16px;height:270px;background:#f0f0f0;"></div>
<div style="left:995px;top:870px;width:466px;height:16px;background:#f0f0f0;"></div>
<div style="left:1461px;top:616px;width:1px;height:271px;background:#fff;"></div>
<div style="left:995px;top:886px;width:467px;height:1px;background:#fff;"></div>
<div style="left:1462px;top:614px;width:1px;height:274px;background:#a0a0a0;"></div>
<div style="left:993px;top:887px;width:470px;height:1px;background:#a0a0a0;"></div>
<div style="left:1463px;top:613px;width:2px;height:276px;background:#fff;"></div>
<div style="left:993px;top:888px;width:472px;height:1px;background:#fff;"></div>
<div style="left:1465px;top:31px;width:1px;height:858px;background:#b4b4b4;"></div>
<div style="left:1000px;top:641px;width:444px;height:21px;background:#f0f0f0;"></div>
<div style="left:1304px;top:616px;width:1px;height:25px;background:#e5e5e5;"></div>
<span class="t" style="left:1002.3px;top:621.91px;font-size:13.1px;transform:scaleX(0.9861);">Return Address</span>
<span class="t" style="left:1310.8px;top:621.91px;font-size:13.1px;transform:scaleX(0.9647);">Parameters</span>
<span class="t" style="left:1002.3px;top:645.04px;font-size:13.3px;transform:scaleX(0.9652);">panorama.CreatePanoramaUIEngineInternal+597C9</span>
<span class="t" style="left:1002.3px;top:666.04px;font-size:13.3px;transform:scaleX(0.9652);">panorama.CreatePanoramaUIEngineInternal+FE1C</span>
<span class="t" style="left:1002.3px;top:687.04px;font-size:13.3px;transform:scaleX(0.9652);">panorama.CreatePanoramaUIEngineInternal+F3A2</span>
<span class="t" style="left:1002.3px;top:708.04px;font-size:13.3px;transform:scaleX(0.9652);">engine.dll+27A934</span>
<span class="t" style="left:1002.3px;top:729.04px;font-size:13.3px;transform:scaleX(0.9652);">engine.dll+27A4A1</span>
<span class="t" style="left:1002.3px;top:750.04px;font-size:13.3px;transform:scaleX(0.9652);">engine.dll+178646</span>
<span class="t" style="left:1002.3px;top:771.04px;font-size:13.3px;transform:scaleX(0.9652);">engine.dll+137104</span>
<span class="t" style="left:1002.3px;top:792.04px;font-size:13.3px;transform:scaleX(0.9652);">engine.dll+228806</span>
<span class="t" style="left:1002.3px;top:813.04px;font-size:13.3px;transform:scaleX(0.9652);">engine.dll+22B5D6</span>
<span class="t" style="left:1002.3px;top:834.04px;font-size:13.3px;transform:scaleX(0.9652);">engine.dll+22C00E</span>
<span class="t" style="left:1002.3px;top:855.04px;font-size:13.3px;transform:scaleX(0.9652);">engine.dll+23D939</span>
<div style="left:1305px;top:641px;width:139.5px;height:229px;overflow:hidden"><div style="left:-1305px;top:-641px;width:1px;height:1px">
<span class="t" style="left:1310.8px;top:645.04px;font-size:13.3px;transform:scaleX(0.9307);">09C4E840,15367410,00000000</span>
<span class="t" style="left:1310.8px;top:666.04px;font-size:13.3px;transform:scaleX(0.9473);">15367410,00000000,DD000000</span>
<span class="t" style="left:1310.8px;top:687.04px;font-size:13.3px;transform:scaleX(0.9632);">datacache.CreateInterface+1234</span>
<span class="t" style="left:1310.8px;top:708.04px;font-size:13.3px;transform:scaleX(0.9632);">datacache.CreateInterface+1234</span>
<span class="t" style="left:1310.8px;top:729.04px;font-size:13.3px;transform:scaleX(0.9627);">materialsystem.CreateInterface</span>
<span class="t" style="left:1310.8px;top:750.04px;font-size:13.3px;transform:scaleX(0.9514);">00000002,materialsystem.Create</span>
<span class="t" style="left:1310.8px;top:771.04px;font-size:13.3px;transform:scaleX(0.8967);">FBF50010,00000000,FBF50010</span>
<span class="t" style="left:1310.8px;top:792.04px;font-size:13.3px;transform:scaleX(0.9663);">00000001,engine.dll+22B5D6</span>
<span class="t" style="left:1310.8px;top:813.04px;font-size:13.3px;transform:scaleX(0.9654);">engine.CreateInterface+1234</span>
<span class="t" style="left:1310.8px;top:834.04px;font-size:13.3px;transform:scaleX(0.9654);">engine.CreateInterface+1234</span>
<span class="t" style="left:1310.8px;top:855.04px;font-size:13.3px;transform:scaleX(0.9389);">00000004,3C142048,00000000</span>
</div></div>
<div style="left:1453px;top:634px;width:2px;height:91px;background:#8a8a8a;border-radius:1px;"></div>
<div style="left:1017px;top:877px;width:385px;height:2px;background:#8a8a8a;border-radius:1px;"></div>
<div style="left:1240px;top:51px;width:226px;height:1px;background:#fff;"></div>
<div style="left:1240px;top:51px;width:1px;height:556px;background:#fff;"></div>
<div style="left:1241px;top:52px;width:225px;height:555px;background:#a0a0a0;"></div>
<div style="left:1242px;top:53px;width:222px;height:553px;background:#f0f0f0;"></div>
<div style="left:1242px;top:53px;width:222px;height:1px;background:#fff;"></div>
<div style="left:1242px;top:53px;width:1px;height:553px;background:#fff;"></div>
<div style="left:1463px;top:53px;width:1px;height:553px;background:#fff;"></div>
<div style="left:1242px;top:605px;width:222px;height:1px;background:#fff;"></div>
<div style="left:1241px;top:606px;width:225px;height:1.5px;background:#a0a0a0;"></div>
<span class="t m rg" style="left:1251.3px;top:58.43px;font-size:13.4px;transform:scaleX(1.2444);-webkit-text-stroke:0.22px #f0f0f0;">Registers:</span>
<div style="left:1251px;top:73px;width:100px;height:2px;background:#000;"></div>
<span class="t m rg" style="left:1386.5px;top:58.43px;font-size:13.4px;transform:scaleX(1.2442);-webkit-text-stroke:0.22px #f0f0f0;">Flags</span>
<div style="left:1386px;top:73px;width:50px;height:2px;background:#000;"></div>
<div style="left:1251px;top:75px;width:120px;height:18px;background:#00ffff;"></div>
<span class="t m rg" style="left:1251.3px;top:79.23px;font-size:13.4px;color:#ff0000;transform:scaleX(1.2443);-webkit-text-stroke:0.22px #00ffff;">EAX <i>0</i>174<i>0</i>2D3</span>
<span class="t m rg" style="left:1251.3px;top:99.23px;font-size:13.4px;transform:scaleX(1.2443);-webkit-text-stroke:0.22px #f0f0f0;">EBX <i>0</i><i>0</i><i>0</i><i>0</i><i>0</i><i>0</i><i>0</i>A</span>
<span class="t m rg" style="left:1251.3px;top:119.23px;font-size:13.4px;color:#ff0000;transform:scaleX(1.2443);-webkit-text-stroke:0.22px #f0f0f0;">ECX <i>0</i>9C4E84<i>0</i></span>
<span class="t m rg" style="left:1251.3px;top:139.23px;font-size:13.4px;transform:scaleX(1.2443);-webkit-text-stroke:0.22px #f0f0f0;">EDX <i>0</i><i>0</i><i>0</i><i>0</i><i>0</i><i>0</i><i>0</i><i>0</i></span>
<span class="t m rg" style="left:1251.3px;top:159.23px;font-size:13.4px;color:#ff0000;transform:scaleX(1.2443);-webkit-text-stroke:0.22px #f0f0f0;">ESI <i>0</i>9A268E4</span>
<span class="t m rg" style="left:1251.3px;top:179.23px;font-size:13.4px;color:#ff0000;transform:scaleX(1.2443);-webkit-text-stroke:0.22px #f0f0f0;">EDI <i>0</i>9A2668<i>0</i></span>
<span class="t m rg" style="left:1251.3px;top:199.23px;font-size:13.4px;color:#ff0000;transform:scaleX(1.2443);-webkit-text-stroke:0.22px #f0f0f0;">EBP <i>0</i><i>0</i>B7D68C</span>
<span class="t m rg" style="left:1251.3px;top:219.23px;font-size:13.4px;color:#ff0000;transform:scaleX(1.2443);-webkit-text-stroke:0.22px #f0f0f0;">ESP <i>0</i><i>0</i>B7D66<i>0</i></span>
<span class="t m rg" style="left:1251.3px;top:239.23px;font-size:13.4px;color:#ff0000;transform:scaleX(1.2443);-webkit-text-stroke:0.22px #f0f0f0;">EIP 766<i>0</i>77F<i>0</i></span>
<span class="t m rg" style="left:1386.5px;top:79.23px;font-size:13.4px;transform:scaleX(1.2439);-webkit-text-stroke:0.22px #f0f0f0;">CF <i>0</i></span>
<span class="t m rg" style="left:1386.5px;top:99.23px;font-size:13.4px;transform:scaleX(1.2439);-webkit-text-stroke:0.22px #f0f0f0;">PF 1</span>
<span class="t m rg" style="left:1386.5px;top:119.23px;font-size:13.4px;transform:scaleX(1.2439);-webkit-text-stroke:0.22px #f0f0f0;">AF <i>0</i></span>
<span class="t m rg" style="left:1386.5px;top:139.23px;font-size:13.4px;transform:scaleX(1.2439);-webkit-text-stroke:0.22px #f0f0f0;">ZF 1</span>
<span class="t m rg" style="left:1386.5px;top:159.23px;font-size:13.4px;transform:scaleX(1.2439);-webkit-text-stroke:0.22px #f0f0f0;">SF <i>0</i></span>
<span class="t m rg" style="left:1386.5px;top:179.23px;font-size:13.4px;transform:scaleX(1.2439);-webkit-text-stroke:0.22px #f0f0f0;">DF <i>0</i></span>
<span class="t m rg" style="left:1386.5px;top:199.23px;font-size:13.4px;transform:scaleX(1.2439);-webkit-text-stroke:0.22px #f0f0f0;">OF <i>0</i></span>
<span class="t m rg" style="left:1251.3px;top:262.43px;font-size:13.4px;transform:scaleX(1.2444);-webkit-text-stroke:0.22px #f0f0f0;">Segment Registers</span>
<div style="left:1251px;top:276px;width:170px;height:2px;background:#000;"></div>
<span class="t m rg" style="left:1251.3px;top:282.23px;font-size:13.4px;transform:scaleX(1.2444);-webkit-text-stroke:0.22px #f0f0f0;">CS <i>0</i><i>0</i>23</span>
<span class="t m rg" style="left:1251.3px;top:302.23px;font-size:13.4px;transform:scaleX(1.2444);-webkit-text-stroke:0.22px #f0f0f0;">SS <i>0</i><i>0</i>2B</span>
<span class="t m rg" style="left:1251.3px;top:322.23px;font-size:13.4px;transform:scaleX(1.2444);-webkit-text-stroke:0.22px #f0f0f0;">DS <i>0</i><i>0</i>2B</span>
<span class="t m rg" style="left:1251.3px;top:342.23px;font-size:13.4px;transform:scaleX(1.2444);-webkit-text-stroke:0.22px #f0f0f0;">ES <i>0</i><i>0</i>2B</span>
<span class="t m rg" style="left:1251.3px;top:362.23px;font-size:13.4px;transform:scaleX(1.2444);-webkit-text-stroke:0.22px #f0f0f0;">FS <i>0</i><i>0</i>53</span>
<span class="t m rg" style="left:1251.3px;top:382.23px;font-size:13.4px;transform:scaleX(1.2444);-webkit-text-stroke:0.22px #f0f0f0;">GS <i>0</i><i>0</i>2B</span>
<div style="left:1442.5px;top:183.3px;width:19.2px;height:29.4px;background:#fdfdfd;box-sizing:border-box;border:1px solid #c9c9c9;border-radius:4.5px;"></div>
<span class="t" style="left:1447.6px;top:190.76px;font-size:16px;transform:scaleX(0.9418);-webkit-text-stroke:0.45px #fdfdfd;">&gt;</span>
<div style="left:1237px;top:315px;width:1px;height:1px;background:#fff;"></div>
<div style="left:1238px;top:316px;width:1px;height:1px;background:#b4b4b4;"></div>
<div style="left:1237px;top:319px;width:1px;height:1px;background:#fff;"></div>
<div style="left:1238px;top:320px;width:1px;height:1px;background:#b4b4b4;"></div>
<div style="left:1237px;top:323px;width:1px;height:1px;background:#fff;"></div>
<div style="left:1238px;top:324px;width:1px;height:1px;background:#b4b4b4;"></div>
<div style="left:1237px;top:327px;width:1px;height:1px;background:#fff;"></div>
<div style="left:1238px;top:328px;width:1px;height:1px;background:#b4b4b4;"></div>
<div style="left:1237px;top:331px;width:1px;height:1px;background:#fff;"></div>
<div style="left:1238px;top:332px;width:1px;height:1px;background:#b4b4b4;"></div>
<div style="left:1237px;top:335px;width:1px;height:1px;background:#fff;"></div>
<div style="left:1238px;top:336px;width:1px;height:1px;background:#b4b4b4;"></div>
<div style="left:1237px;top:339px;width:1px;height:1px;background:#fff;"></div>
<div style="left:1238px;top:340px;width:1px;height:1px;background:#b4b4b4;"></div>
<div style="left:1237px;top:343px;width:1px;height:1px;background:#fff;"></div>
<div style="left:1238px;top:344px;width:1px;height:1px;background:#b4b4b4;"></div>
</div></div>

</body></html>
